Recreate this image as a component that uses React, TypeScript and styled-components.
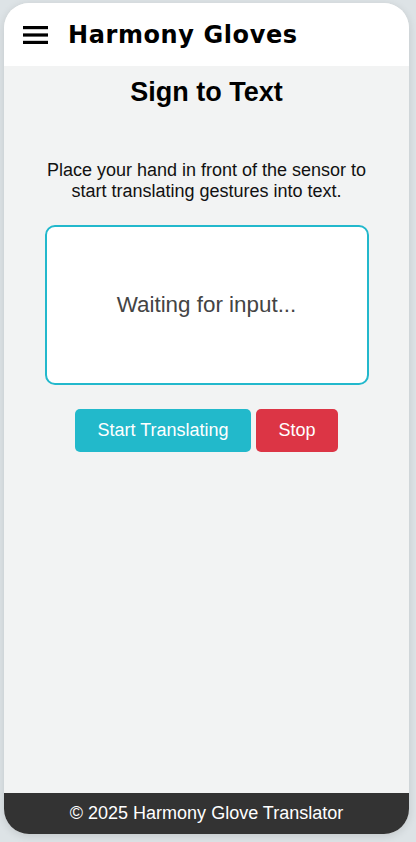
import React from 'react'
import styled, { createGlobalStyle } from 'styled-components'

const GlobalStyle = createGlobalStyle`
  html, body {
    margin: 0;
    padding: 0;
    background-color: #dde3e6;
    font-family: 'Liberation Sans', Arial, sans-serif;
    font-size: 18px;
  }
`

const Screen = styled.div`
  box-sizing: border-box;
  height: 842px;
  padding: 3px 7px 8px 4px;
`

const Phone = styled.div`
  height: 100%;
  display: flex;
  flex-direction: column;
  border-radius: 25px;
  overflow: hidden;
  background-color: #f2f3f3;
  box-shadow: 0 2px 8px rgba(0, 0, 0, 0.12);
`

const Header = styled.header`
  height: 63px;
  flex-shrink: 0;
  display: flex;
  align-items: center;
  gap: 20px;
  padding: 0 19px;
  background-color: #fff;
`

const MenuBtn = styled.button`
  border: none;
  background: transparent;
  padding: 0;
  display: flex;
  cursor: pointer;
`

const Brand = styled.h1`
  margin: 0;
  font-family: 'DejaVu Sans', 'Inter', sans-serif;
  font-size: 24px;
  font-weight: 700;
  color: #000;
  letter-spacing: 0.6px;
`

const Main = styled.main`
  flex: 1;
  display: flex;
  flex-direction: column;
  align-items: center;
  padding-top: 11px;
`

const Title = styled.h2`
  margin: 0;
  font-size: 27px;
  line-height: 31px;
  font-weight: 700;
  color: #000;
`

const Intro = styled.p`
  margin: 52px 0 0;
  padding: 0 30px;
  font-size: 18px;
  line-height: 20.7px;
  text-align: center;
  color: #111;
`

const OutputBox = styled.div`
  box-sizing: border-box;
  width: 80%;
  height: 160px;
  margin-top: 24px;
  display: flex;
  align-items: center;
  justify-content: center;
  border: 2px solid #22b8cc;
  border-radius: 10px;
  background-color: #fff;
  font-size: 22.4px;
  color: #444;
`

const Actions = styled.div`
  display: flex;
  gap: 5px;
  margin-top: 24px;
`

const ActionBtn = styled.button<{ $tone: 'start' | 'stop' }>`
  font-family: 'Liberation Sans', Arial, sans-serif;
  font-size: 18px;
  line-height: 21px;
  padding: 11px 22.5px;
  border: none;
  border-radius: 5px;
  color: #fff;
  cursor: pointer;
  background-color: ${p => (p.$tone === 'start' ? '#22b9cb' : '#dc3545')};
`

const Footer = styled.footer`
  height: 41px;
  flex-shrink: 0;
  display: flex;
  align-items: center;
  justify-content: center;
  background-color: #333;
  color: #fff;
  font-size: 18px;
`

const MenuIcon = () => (
  <svg width='25' height='20' viewBox='0 0 25 20'>
    <rect x='0' y='1' width='25' height='3.2' fill='#000' />
    <rect x='0' y='8.4' width='25' height='3.2' fill='#000' />
    <rect x='0' y='15.8' width='25' height='3.2' fill='#000' />
  </svg>
)

const App = () => {
  return (
    <Screen>
      <GlobalStyle />
      <Phone>
        <Header>
          <MenuBtn aria-label='menu'>
            <MenuIcon />
          </MenuBtn>
          <Brand>Harmony Gloves</Brand>
        </Header>
        <Main>
          <Title>Sign to Text</Title>
          <Intro>
            Place your hand in front of the sensor to start translating
            gestures into text.
          </Intro>
          <OutputBox>Waiting for input...</OutputBox>
          <Actions>
            <ActionBtn $tone='start'>Start Translating</ActionBtn>
            <ActionBtn $tone='stop'>Stop</ActionBtn>
          </Actions>
        </Main>
        <Footer>© 2025 Harmony Glove Translator</Footer>
      </Phone>
    </Screen>
  )
}

export default App
